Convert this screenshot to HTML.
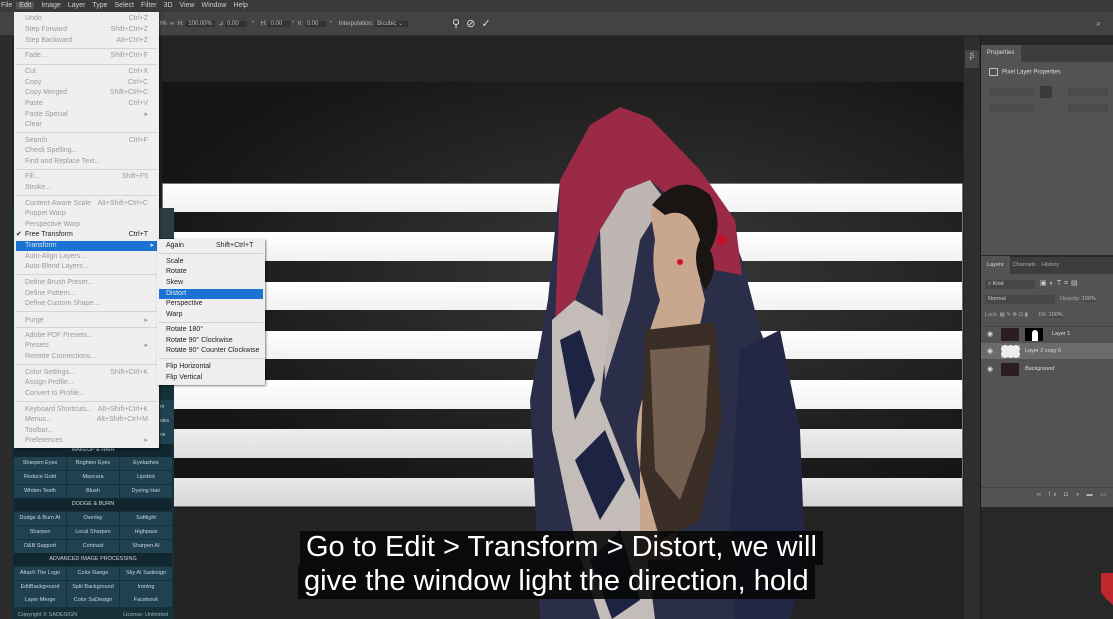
<!DOCTYPE html>
<html><head><meta charset="utf-8"><style>
*{margin:0;padding:0;box-sizing:border-box}
body{width:1113px;height:619px;overflow:hidden;background:#282828;font-family:"Liberation Sans",sans-serif;position:relative}
.a{position:absolute}
.mb span{margin-right:7px}
.m div{position:absolute;left:11px;right:8px;font-size:7px;color:#9a9a9a;height:10px;line-height:10px;white-space:nowrap}
.m div b{position:absolute;right:3px;font-weight:normal}
.m i{position:absolute;left:2px;right:2px;height:1px;background:#d4d4d4}
.s div{position:absolute;left:0;right:0;padding-left:9px;font-size:7px;color:#222;height:10px;line-height:10px;white-space:nowrap}
.g div{position:absolute;height:13px;background:#1f4150;color:#c8d6dc;font-size:5.5px;text-align:center;line-height:13px;white-space:nowrap;overflow:hidden}
.g .h{background:#11262f;color:#c8d6dc}
.st{position:absolute;left:162px;width:801px;background:linear-gradient(#fff,#f2f2f2)}
.sub{position:absolute;background:rgba(8,8,8,.9);color:#fff;font-size:29px;line-height:33px;white-space:nowrap}
</style></head><body>
<div class="a mb" style="left:0;top:0;width:1113px;height:12px;background:#3a3a3a;color:#cfcfcf;font-size:7px;line-height:12px;padding-left:1px"><span>File</span><span style="background:#555;padding:0 3px;margin-left:-3px">Edit</span><span>Image</span><span>Layer</span><span>Type</span><span>Select</span><span>Filter</span><span>3D</span><span>View</span><span>Window</span><span>Help</span></div>
<div class="a" style="left:0;top:12px;width:1113px;height:24px;background:#434343;border-bottom:1px solid #2a2a2a"></div>
<div class="a" style="left:158px;top:20px;font-size:6px;color:#bbb;white-space:nowrap">0% &nbsp;∞ &nbsp;H: <span style="background:#333;padding:0 3px">100.00%</span> &nbsp;⊿ <span style="background:#333;padding:0 8px 0 2px">0.00</span> &nbsp; ° &nbsp; &nbsp;H: <span style="background:#333;padding:0 8px 0 2px">0.00</span> ° &nbsp;V: <span style="background:#333;padding:0 8px 0 2px">0.00</span> &nbsp;° &nbsp; &nbsp;Interpolation: <span style="background:#333;padding:0 5px 0 2px">Bicubic ⌄</span></div>
<div class="a" style="left:452px;top:17px;color:#ddd;font-size:11px">⚲ &nbsp;⊘ &nbsp;✓</div>
<div class="a" style="left:1096px;top:18px;color:#bbb;font-size:9px">⌕</div>
<div class="a" style="left:0;top:37px;width:965px;height:582px;background:#232323"></div>
<div class="a" style="left:0;top:37px;width:12px;height:582px;background:#2c2c2c"></div>
<div class="a" style="left:162px;top:82px;width:801px;height:426px;background:radial-gradient(ellipse at 60% 45%,#3a3a3a,#151515 75%)"></div>
<div class="st" style="top:183px;height:29px"></div>
<div class="st" style="top:232px;height:29px"></div>
<div class="st" style="top:282px;height:28px"></div>
<div class="st" style="top:331px;height:28px"></div>
<div class="st" style="top:380px;height:29px"></div>
<div class="st" style="top:429px;height:29px;background:linear-gradient(#eee,#ddd)"></div>
<div class="st" style="top:478px;height:29px;background:linear-gradient(#e8e8e8,#d6d6d6)"></div>
<div class="a" style="left:162px;top:183px;width:801px;height:324px;border:1px solid #777"></div>
<svg class="a" style="left:0;top:0" width="1113" height="619">
<path d="M548 300 L560 180 L590 125 L620 107 L650 118 L720 200 L742 260 L760 330 L780 380 L800 470 L805 560 L790 619 L540 619 L535 500 L530 400 Z" fill="#2b2e48"/>
<path d="M560 180 L590 125 L620 107 L650 118 L700 170 L735 220 L742 275 L715 270 L690 215 L650 180 L625 190 L600 230 L575 300 L555 330 Z" fill="#9a2a45"/>
<path d="M600 230 L625 190 L650 180 L665 200 L640 240 L630 300 L605 380 Z" fill="#bfb6b4"/>
<path d="M552 320 L575 300 L610 320 L600 400 L640 500 L655 619 L600 619 L575 540 L552 430 Z" fill="#c4bcb8"/>
<path d="M560 340 L580 330 L595 380 L575 420 Z M575 460 L605 430 L625 480 L600 520 Z M590 560 L620 530 L640 600 L612 619 Z" fill="#1d2342"/>
<path d="M650 210 Q690 190 705 230 Q712 262 700 280 L705 300 Q700 330 690 360 L690 430 Q700 480 680 520 L670 560 L640 560 L640 470 Q630 420 650 380 L650 330 L660 300 Q650 270 655 240 Z" fill="#c9a78f"/>
<path d="M652 205 Q680 170 710 195 Q725 225 710 250 Q720 270 705 290 Q690 260 700 240 Q690 205 665 215 Z" fill="#1a1413"/>
<path d="M645 330 L715 322 L722 420 L700 520 L660 540 L640 470 Z" fill="#3a2e26"/>
<path d="M650 350 L710 345 L705 430 L680 500 L655 470 Z" fill="#8c7563" opacity=".7"/>
<path d="M740 350 L780 330 L800 430 L805 560 L790 619 L735 619 L730 520 Z" fill="#232745"/>
<circle cx="722" cy="240" r="5" fill="#c0102a"/>
<circle cx="680" cy="262" r="3" fill="#d01030"/>
</svg>
<div class="a" style="left:964px;top:37px;width:17px;height:582px;background:#2e2e2e;border-right:1px solid #1a1a1a"></div>
<div class="a" style="left:965px;top:50px;width:14px;height:18px;background:#474747;border-radius:2px;color:#c7a38a;font-size:10px;text-align:center">ʂ</div>
<div class="a" style="left:981px;top:45px;width:132px;height:210px;background:#535353"></div>
<div class="a" style="left:981px;top:45px;width:40px;height:17px;background:#535353;color:#ddd;font-size:6px;padding:5px 0 0 6px">Properties</div>
<div class="a" style="left:1021px;top:45px;width:92px;height:17px;background:#3d3d3d"></div>
<div class="a" style="left:989px;top:68px;font-size:6px;color:#ddd"><span style="display:inline-block;width:9px;height:8px;border:1px solid #bbb;vertical-align:middle;margin-right:4px"></span>Pixel Layer Properties</div>
<div class="a" style="left:989px;top:88px;width:45px;height:8px;background:#4b4b4b"></div>
<div class="a" style="left:1040px;top:86px;width:12px;height:12px;background:#3a3a3a"></div>
<div class="a" style="left:1068px;top:88px;width:40px;height:8px;background:#4b4b4b"></div>
<div class="a" style="left:989px;top:104px;width:45px;height:8px;background:#4b4b4b"></div>
<div class="a" style="left:1068px;top:104px;width:40px;height:8px;background:#4b4b4b"></div>
<div class="a" style="left:981px;top:257px;width:132px;height:250px;background:#4e4e4e"></div>
<div class="a" style="left:981px;top:257px;width:132px;height:17px;background:#3d3d3d;font-size:5.5px;color:#aaa;line-height:17px"><span style="background:#535353;color:#ddd;padding:6px 6px">Layers</span> &nbsp;Channels &nbsp; &nbsp;History</div>
<div class="a" style="left:981px;top:274px;width:132px;height:233px;background:#535353"></div>
<div class="a" style="left:985px;top:280px;width:50px;height:9px;background:#474747;font-size:5.5px;color:#ccc;padding-left:3px;line-height:9px">⌕ Kind</div>
<div class="a" style="left:1040px;top:279px;font-size:7px;color:#ccc;letter-spacing:3px">▣◐T⌗▤</div>
<div class="a" style="left:985px;top:295px;width:70px;height:9px;background:#474747;font-size:5.5px;color:#ccc;padding-left:3px;line-height:9px">Normal</div>
<div class="a" style="left:1060px;top:296px;font-size:5.5px;color:#aaa">Opacity: <span style="background:#474747;color:#ccc">100%</span></div>
<div class="a" style="left:985px;top:312px;font-size:5.5px;color:#aaa">Lock: ▦ ✎ ✥ ⊡ ▮ &nbsp; &nbsp; &nbsp; Fill: <span style="background:#474747;color:#ccc">100%</span></div>
<div class="a" style="left:981px;top:343px;width:132px;height:16px;background:#6b6b6b"></div>
<div class="a" style="left:981px;top:326px;width:132px;height:1px;background:#444"></div>
<div class="a" style="left:987px;top:330px;font-size:7px;color:#ddd">◉</div>
<div class="a" style="left:1001px;top:328px;width:18px;height:13px;background:#2a1e22"></div>
<div class="a" style="left:1025px;top:328px;width:18px;height:13px;background:#000"><div class="a" style="left:7px;top:2px;width:6px;height:11px;background:#fff;border-radius:3px 3px 0 0"></div></div>
<div class="a" style="left:1052px;top:331px;font-size:5.5px;color:#ddd">Layer 1</div>
<div class="a" style="left:987px;top:347px;font-size:7px;color:#ddd">◉</div>
<div class="a" style="left:1001px;top:345px;width:19px;height:13px;background:#eee;border:1px dashed #999"></div>
<div class="a" style="left:1025px;top:348px;font-size:5.5px;color:#ddd">Layer 2 copy 6</div>
<div class="a" style="left:987px;top:365px;font-size:7px;color:#ddd">◉</div>
<div class="a" style="left:1001px;top:363px;width:18px;height:13px;background:#2a1e22"></div>
<div class="a" style="left:1025px;top:366px;font-size:5.5px;color:#ddd;font-style:italic">Background</div>
<div class="a" style="left:981px;top:487px;width:132px;height:14px;border-top:1px solid #444;font-size:6px;color:#bbb;text-align:right;padding-right:4px;line-height:14px;letter-spacing:3px">∞ fx ◘ ◑ ▬ ▭</div>
<div class="a" style="left:1101px;top:573px;width:12px;height:32px;background:#c0272d;clip-path:polygon(0 0,100% 0,100% 100%,40% 80%,0 60%)"></div>
<div class="a" style="left:12px;top:208px;width:162px;height:411px;background:#16303a"></div>
<div class="g">
<div class="h" style="left:14px;top:444px;width:158px">MAKEUP &amp; HAIR</div>
<div style="left:14px;top:457px;width:52px">Sharpen Eyes</div><div style="left:67px;top:457px;width:52px">Brighten Eyes</div><div style="left:120px;top:457px;width:52px">Eyelashes</div>
<div style="left:14px;top:471px;width:52px">Reduce Gold</div><div style="left:67px;top:471px;width:52px">Mascara</div><div style="left:120px;top:471px;width:52px">Lipstick</div>
<div style="left:14px;top:485px;width:52px">Whiten Teeth</div><div style="left:67px;top:485px;width:52px">Blush</div><div style="left:120px;top:485px;width:52px">Dyeing Hair</div>
<div class="h" style="left:14px;top:498px;width:158px">DODGE &amp; BURN</div>
<div style="left:14px;top:512px;width:52px">Dodge &amp; Burn AI</div><div style="left:67px;top:512px;width:52px">Overlay</div><div style="left:120px;top:512px;width:52px">Softlight</div>
<div style="left:14px;top:526px;width:52px">Sharpen</div><div style="left:67px;top:526px;width:52px">Local Sharpen</div><div style="left:120px;top:526px;width:52px">Highpass</div>
<div style="left:14px;top:540px;width:52px">D&amp;B Support</div><div style="left:67px;top:540px;width:52px">Contrast</div><div style="left:120px;top:540px;width:52px">Sharpen AI</div>
<div class="h" style="left:14px;top:553px;width:158px">ADVANCED IMAGE PROCESSING</div>
<div style="left:14px;top:567px;width:52px">Attach The Logo</div><div style="left:67px;top:567px;width:52px">Color Range</div><div style="left:120px;top:567px;width:52px">Sky AI Sadesign</div>
<div style="left:14px;top:581px;width:52px">EditBackground</div><div style="left:67px;top:581px;width:52px">Split Background</div><div style="left:120px;top:581px;width:52px">Ironing</div>
<div style="left:14px;top:594px;width:52px">Layer Merge</div><div style="left:67px;top:594px;width:52px">Color SaDesign</div><div style="left:120px;top:594px;width:52px">Facebook</div>
</div>
<div class="a" style="left:18px;top:612px;font-size:5.5px;color:#9fb3bb;width:150px">Copyright © SADESIGN<span style="float:right">License: Unlimited</span></div>
<div class="a" style="left:158px;top:208px;width:16px;height:30px;background:#2d3d44"></div>
<div class="a" style="left:158px;top:400px;width:16px;height:44px;background:#1f4150;font-size:5px;color:#ccc;line-height:14px;padding-left:2px">m<br>ales<br>ne</div>
<div class="a m" style="left:14px;top:12px;width:145px;height:436px;background:#efefef;box-shadow:1px 1px 2px rgba(0,0,0,.5)">
<div style="top:2px">Undo<b>Ctrl+Z</b></div>
<div style="top:13px">Step Forward<b>Shift+Ctrl+Z</b></div>
<div style="top:24px">Step Backward<b>Alt+Ctrl+Z</b></div><i style="top:36px"></i>
<div style="top:39px">Fade...<b>Shift+Ctrl+F</b></div><i style="top:52px"></i>
<div style="top:55px">Cut<b>Ctrl+X</b></div>
<div style="top:66px">Copy<b>Ctrl+C</b></div>
<div style="top:76px">Copy Merged<b>Shift+Ctrl+C</b></div>
<div style="top:87px">Paste<b>Ctrl+V</b></div>
<div style="top:98px">Paste Special<b>▸</b></div>
<div style="top:108px">Clear</div><i style="top:120px"></i>
<div style="top:124px">Search<b>Ctrl+F</b></div>
<div style="top:134px">Check Spelling...</div>
<div style="top:145px">Find and Replace Text...</div><i style="top:157px"></i>
<div style="top:160px">Fill...<b>Shift+F5</b></div>
<div style="top:171px">Stroke...</div><i style="top:183px"></i>
<div style="top:187px">Content-Aware Scale<b>Alt+Shift+Ctrl+C</b></div>
<div style="top:197px">Puppet Warp</div>
<div style="top:208px">Perspective Warp</div>
<div style="top:218px;color:#222"><span style="position:absolute;left:-9px">✔</span>Free Transform<b>Ctrl+T</b></div>
<div style="top:229px;left:2px;right:2px;padding-left:9px;background:#1a73d1;color:#dfe9f5">Transform<b>▸</b></div>
<div style="top:240px">Auto-Align Layers...</div>
<div style="top:250px">Auto-Blend Layers...</div><i style="top:262px"></i>
<div style="top:266px">Define Brush Preset...</div>
<div style="top:277px">Define Pattern...</div>
<div style="top:287px">Define Custom Shape...</div><i style="top:299px"></i>
<div style="top:304px">Purge<b>▸</b></div><i style="top:315px"></i>
<div style="top:319px">Adobe PDF Presets...</div>
<div style="top:329px">Presets<b>▸</b></div>
<div style="top:340px">Remote Connections...</div><i style="top:352px"></i>
<div style="top:356px">Color Settings...<b>Shift+Ctrl+K</b></div>
<div style="top:366px">Assign Profile...</div>
<div style="top:377px">Convert to Profile...</div><i style="top:389px"></i>
<div style="top:393px">Keyboard Shortcuts...<b>Alt+Shift+Ctrl+K</b></div>
<div style="top:403px">Menus...<b>Alt+Shift+Ctrl+M</b></div>
<div style="top:414px">Toolbar...</div>
<div style="top:424px">Preferences<b>▸</b></div>
</div>
<div class="a s" style="left:157px;top:239px;width:108px;height:146px;background:#efefef;box-shadow:1px 1px 2px rgba(0,0,0,.5)">
<div style="top:2px">Again<span style="position:absolute;left:59px">Shift+Ctrl+T</span></div>
<i class="a" style="left:2px;right:2px;top:14px;height:1px;background:#d0d0d0"></i>
<div style="top:18px">Scale</div>
<div style="top:28px">Rotate</div>
<div style="top:39px">Skew</div>
<div style="top:50px;left:2px;right:2px;padding-left:7px;background:#1a73d1;color:#e6eef8">Distort</div>
<div style="top:60px">Perspective</div>
<div style="top:71px">Warp</div>
<i class="a" style="left:2px;right:2px;top:83px;height:1px;background:#d0d0d0"></i>
<div style="top:86px">Rotate 180°</div>
<div style="top:97px">Rotate 90° Clockwise</div>
<div style="top:107px">Rotate 90° Counter Clockwise</div>
<i class="a" style="left:2px;right:2px;top:119px;height:1px;background:#d0d0d0"></i>
<div style="top:123px">Flip Horizontal</div>
<div style="top:134px">Flip Vertical</div>
</div>
<div class="sub" style="left:300px;top:531px;padding:0 6px;height:34px">Go to Edit &gt; Transform &gt; Distort, we will</div>
<div class="sub" style="left:298px;top:565px;padding:0 6px;height:34px">give the window light the direction, hold</div>
</body></html>
